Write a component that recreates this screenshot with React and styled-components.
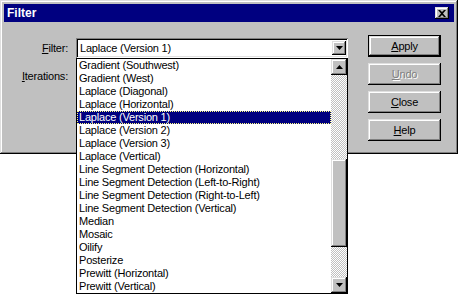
import React from 'react'
import styled, {createGlobalStyle, css} from 'styled-components'

const GlobalStyle = createGlobalStyle`
    html, body {
        margin: 0;
        background: #fff;
    }
    body {
        min-height: 100vh;
        font-family: "Liberation Sans", Arial, sans-serif;
        font-size: 11px;
        color: #000;
    }
    #root {
        min-height: 100vh;
    }
`

const filters = [
    'Gradient (Southwest)',
    'Gradient (West)',
    'Laplace (Diagonal)',
    'Laplace (Horizontal)',
    'Laplace (Version 1)',
    'Laplace (Version 2)',
    'Laplace (Version 3)',
    'Laplace (Vertical)',
    'Line Segment Detection (Horizontal)',
    'Line Segment Detection (Left-to-Right)',
    'Line Segment Detection (Right-to-Left)',
    'Line Segment Detection (Vertical)',
    'Median',
    'Mosaic',
    'Oilify',
    'Posterize',
    'Prewitt (Horizontal)',
    'Prewitt (Vertical)',
]

const selected = 'Laplace (Version 1)'

//raised 3d edge used by buttons and scroll parts
const raised = css`
    background: #c0c0c0;
    box-shadow: inset -1px -1px #000, inset 1px 1px #dfdfdf, inset -2px -2px #808080, inset 2px 2px #fff;
`

function Arrow({down}) {
    return (
        <svg width="7" height="4" viewBox="0 0 7 4">
            {down
                ? <path d="M0 0h7L3.5 4z" fill="#000"/>
                : <path d="M0 4h7L3.5 0z" fill="#000"/>}
        </svg>
    )
}

function App() {
    return (
        <>
        <GlobalStyle/>
        <Window>
            <TitleBar>
                <Title>Filter</Title>
                <CloseBox>
                    <svg width="8" height="7" viewBox="0 0 8 7">
                        <path d="M0 0h2l2 2 2-2h2L5 3.5 8 7H6L4 5 2 7H0l3-3.5z" fill="#000"/>
                    </svg>
                </CloseBox>
            </TitleBar>
            <Body>
                <Fields>
                    <FieldRow>
                        <Label><u>F</u>ilter:</Label>
                        <ComboWrap>
                            <Combo>
                                <ComboText>{selected}</ComboText>
                                <DropButton><Arrow down/></DropButton>
                            </Combo>
                            <DropList>
                                <Items>
                                    {filters.map(name=>(
                                        <Item key={name} $active={name===selected}>{name}</Item>
                                    ))}
                                </Items>
                                <ScrollBar>
                                    <ScrollButton><Arrow/></ScrollButton>
                                    <Track $h={84}/>
                                    <Thumb/>
                                    <Track/>
                                    <ScrollButton><Arrow down/></ScrollButton>
                                </ScrollBar>
                            </DropList>
                        </ComboWrap>
                    </FieldRow>
                    <FieldRow>
                        <Label><u>I</u>terations:</Label>
                    </FieldRow>
                </Fields>
                <Buttons>
                    <Button $isDefault><u>A</u>pply</Button>
                    <Button $disabled><u>U</u>ndo</Button>
                    <Button><u>C</u>lose</Button>
                    <Button><u>H</u>elp</Button>
                </Buttons>
            </Body>
        </Window>
        </>
    )
}

const Window=styled.div`
    position: relative;
    width: 458px;
    height: 154px;
    box-sizing: border-box;
    padding: 4px 4px 0 4px;
    background: #c0c0c0;
    box-shadow: inset -1px -1px #000, inset 1px 1px #dfdfdf, inset -2px -2px #808080, inset 2px 2px #fff;
`

const TitleBar=styled.div`
    height: 18px;
    background: #000080;
    display: flex;
    align-items: center;
    justify-content: space-between;
    padding: 0 5px 0 3px;
`

const Title=styled.span`
    color: #fff;
    font-weight: bold;
    font-size: 12px;
`

const CloseBox=styled.div`
    ${raised};
    width: 14px;
    height: 12px;
    display: flex;
    align-items: center;
    justify-content: center;
`

const Body=styled.div`
    display: flex;
    padding-top: 13px;
    letter-spacing: -0.2px;
`

const Fields=styled.div`
    display: flex;
    flex-direction: column;
    gap: 8px;
    margin-top: 3px;
`

const FieldRow=styled.div`
    display: flex;
    align-items: center;
    gap: 8px;
    height: 20px;
`

const Label=styled.div`
    width: 64px;
    text-align: right;
`

const ComboWrap=styled.div`
    position: relative;
    width: 272px;
`

const Combo=styled.div`
    height: 20px;
    box-sizing: border-box;
    background: #fff;
    box-shadow: inset 1px 1px #808080, inset -1px -1px #fff, inset 2px 2px #000, inset -2px -2px #dfdfdf;
    display: flex;
    align-items: center;
    padding: 2px;
`

const ComboText=styled.div`
    flex: 1;
    padding-left: 2px;
`

const DropButton=styled.div`
    ${raised};
    width: 14px;
    height: 14px;
    display: flex;
    align-items: center;
    justify-content: center;
`

const DropList=styled.div`
    position: absolute;
    top: 20px;
    left: 0;
    width: 272px;
    box-sizing: border-box;
    border: 1px solid #000;
    background: #fff;
    display: flex;
    z-index: 5;
`

const Items=styled.div`
    flex: 1;
    display: flex;
    flex-direction: column;
`

const Item=styled.div`
    height: 13px;
    line-height: 13px;
    padding-left: 2px;
    white-space: nowrap;
    ${p=>p.$active && css`
        background: #000080;
        color: #fff;
        outline: 1px dotted #ffff80;
        outline-offset: -1px;
    `}
`

const ScrollBar=styled.div`
    width: 16px;
    display: flex;
    flex-direction: column;
    background-image: repeating-conic-gradient(#c0c0c0 0 25%, #fff 0 50%);
    background-size: 2px 2px;
`

const ScrollButton=styled.div`
    ${raised};
    height: 16px;
    display: flex;
    align-items: center;
    justify-content: center;
`

const Track=styled.div`
    ${p=>p.$h ? css`height: ${p.$h}px;` : css`flex: 1;`}
`

const Thumb=styled.div`
    ${raised};
    height: 88px;
`

const Buttons=styled.div`
    display: flex;
    flex-direction: column;
    gap: 6px;
    margin-left: 20px;
`

const Button=styled.div`
    ${raised};
    width: 73px;
    height: 22px;
    box-sizing: border-box;
    display: flex;
    align-items: center;
    justify-content: center;
    ${p=>p.$isDefault && css`
        box-shadow: inset 0 0 0 1px #000, inset -2px -2px #000, inset 2px 2px #dfdfdf, inset -3px -3px #808080, inset 3px 3px #fff;
    `}
    ${p=>p.$disabled && css`
        color: #808080;
        text-shadow: 1px 1px #fff;
    `}
`

export default App
